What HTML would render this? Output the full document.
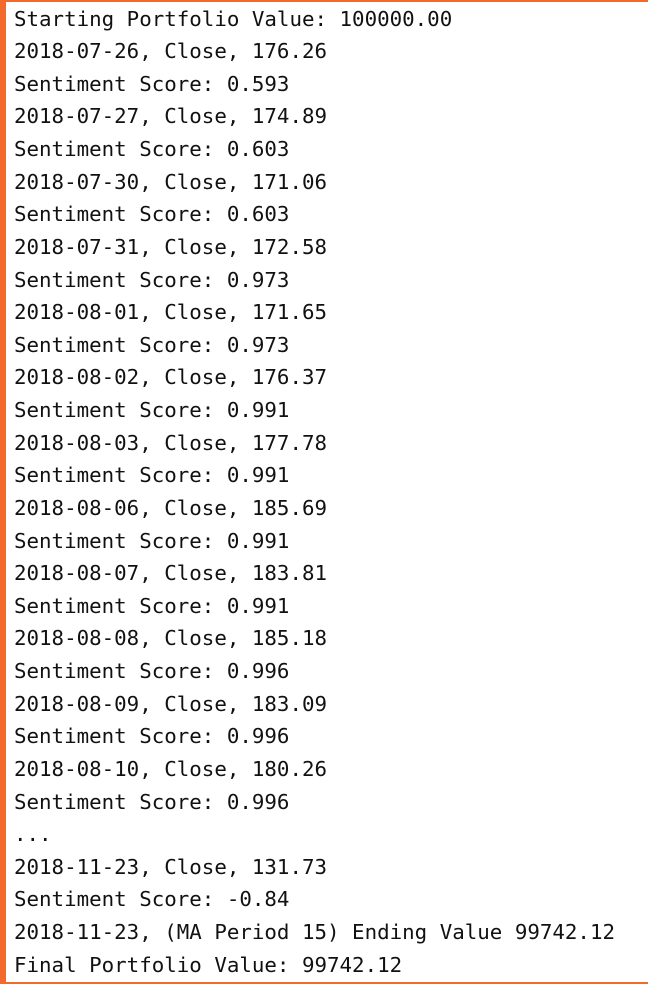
<!DOCTYPE html>
<html><head><style>
html,body{margin:0;padding:0;background:#fff;}
body{width:648px;height:984px;overflow:hidden;position:relative;}
.t{position:absolute;top:0;left:0;width:648px;height:2px;background:#f26a2c;}
.b{position:absolute;bottom:0;left:0;width:648px;height:2px;background:#f26a2c;}
.l{position:absolute;top:0;left:0;width:6px;height:984px;background:#f26a2c;}
pre{margin:0;position:absolute;top:2.6px;left:14px;font-family:"DejaVu Sans Mono","Liberation Mono",monospace;font-size:20.8px;line-height:32.62px;color:#111;}
</style></head><body>
<div class="t"></div><div class="b"></div><div class="l"></div>
<pre>Starting Portfolio Value: 100000.00
2018-07-26, Close, 176.26
Sentiment Score: 0.593
2018-07-27, Close, 174.89
Sentiment Score: 0.603
2018-07-30, Close, 171.06
Sentiment Score: 0.603
2018-07-31, Close, 172.58
Sentiment Score: 0.973
2018-08-01, Close, 171.65
Sentiment Score: 0.973
2018-08-02, Close, 176.37
Sentiment Score: 0.991
2018-08-03, Close, 177.78
Sentiment Score: 0.991
2018-08-06, Close, 185.69
Sentiment Score: 0.991
2018-08-07, Close, 183.81
Sentiment Score: 0.991
2018-08-08, Close, 185.18
Sentiment Score: 0.996
2018-08-09, Close, 183.09
Sentiment Score: 0.996
2018-08-10, Close, 180.26
Sentiment Score: 0.996
...
2018-11-23, Close, 131.73
Sentiment Score: -0.84
2018-11-23, (MA Period 15) Ending Value 99742.12
Final Portfolio Value: 99742.12</pre>
</body></html>
